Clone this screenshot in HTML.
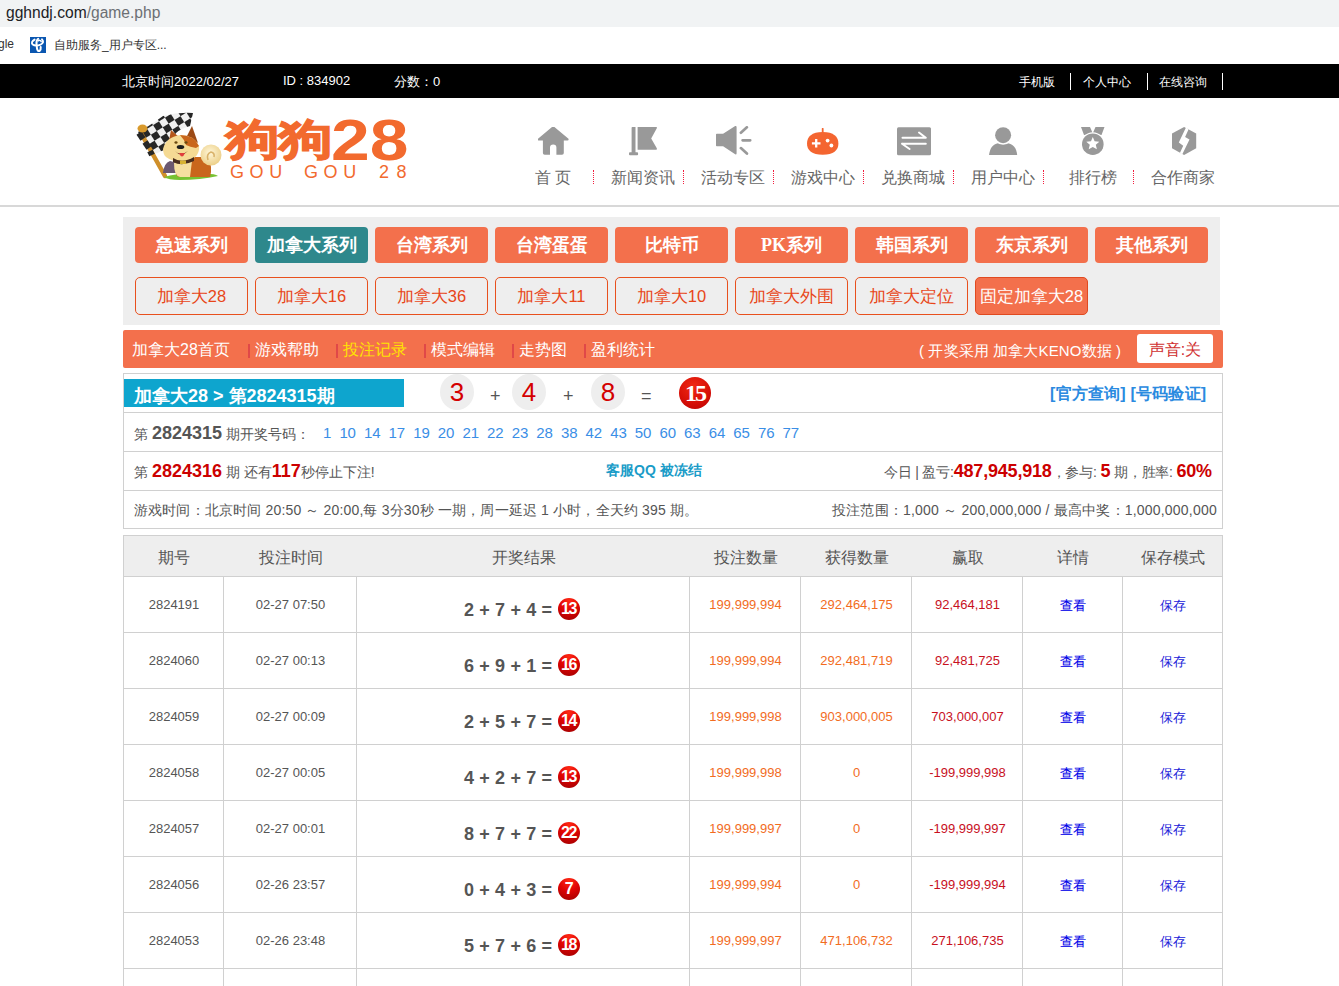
<!DOCTYPE html>
<html><head><meta charset="utf-8">
<style>
*{margin:0;padding:0;box-sizing:border-box}
html,body{width:1339px;height:986px;overflow:hidden;background:#fff;font-family:"Liberation Sans",sans-serif;color:#333}
.abs{position:absolute}
#urlbar{position:absolute;left:0;top:0;width:1339px;height:27px;background:#f1f3f4}
#urlbar span{position:absolute;left:6px;top:4px;font-size:15.6px;color:#202124;white-space:nowrap}
#urlbar span i{font-style:normal;color:#6c6f73}
#bm{position:absolute;left:0;top:27px;width:1339px;height:37px;background:#fff}
#bm .t1{position:absolute;left:-2px;top:10px;font-size:12px;color:#333}
#bm .ic{position:absolute;left:30px;top:37px}
#bm .t2{position:absolute;left:54px;top:10px;font-size:12px;color:#333}
#top{position:absolute;left:0;top:64px;width:1339px;height:34px;background:#000;color:#fff;font-size:12px}
#top span{position:absolute;top:10px;white-space:nowrap}
#top .vs{position:absolute;top:9px;width:1px;height:17px;background:#fff}
#hdr{position:absolute;left:0;top:98px;width:1339px;height:109px;background:#fff;border-bottom:2px solid #d8d8d8}
.nav{position:absolute;top:0;width:90px;height:107px;text-align:center}
.nav svg{position:absolute;left:29px;top:29px}
.nav .lb{position:absolute;left:0;width:90px;top:70px;font-size:16px;color:#666;white-space:nowrap}
.nav .sep{position:absolute;left:85px;top:72px;height:14px;border-left:1px dotted #f21e3e}

#panel{position:absolute;left:123px;top:217px;width:1097px;height:108px;background:#eee}
.b1{position:absolute;top:10px;width:113px;height:36px;background:#f3704c;border-radius:4px;color:#fff;font-size:18px;font-weight:bold;text-align:center;line-height:36px;font-family:"Liberation Serif",serif;white-space:nowrap}
.b1.on{background:#2e888c}
.b2{position:absolute;top:60px;width:113px;height:38px;border:1px solid #e8501e;border-radius:5px;color:#e84618;font-size:16.5px;text-align:center;line-height:37px;white-space:nowrap}
.b2.on{background:#f3704c;color:#fff;border-color:#e04a20}
#obar{position:absolute;left:123px;top:330px;width:1100px;height:38px;background:#f3704c;border-radius:2px;color:#fff;font-size:16px}
#obar span{position:absolute;top:10px;white-space:nowrap}
#obar .vl{position:absolute;top:14px;width:2px;height:14px;background:#e04848}
#info{position:absolute;left:123px;top:373px;width:1100px;height:156px;border:1px solid #d0d0d0;background:#fff;font-size:14px;color:#555}
#info .hr{position:absolute;left:0;width:1098px;height:1px;background:#d0d0d0}
#info span{position:absolute;white-space:nowrap}

#tbl{position:absolute;left:123px;top:535px;width:1100px;height:460px;border-left:1px solid #d0d0d0;border-right:1px solid #d0d0d0;border-top:1px solid #d0d0d0;background:#fff;overflow:hidden}
#tbl .th{position:absolute;left:0;top:0;width:1100px;height:41px;background:#eee;border-bottom:1px solid #d0d0d0}
#tbl .c{position:absolute;top:0;text-align:center;white-space:nowrap}
#tbl .vl{position:absolute;top:41px;width:1px;height:500px;background:#d0d0d0}
#tbl .hl{position:absolute;left:0;width:1100px;height:1px;background:#d0d0d0}
.hd{font-size:16px;color:#555;top:12px !important}
.rw{position:absolute;left:0;width:1100px;height:56px}
#tbl .rw .c{top:20px;font-size:13px;color:#555}
.rw .res{position:absolute;top:23px;font-size:18px;font-weight:bold;color:#555;white-space:nowrap;letter-spacing:0.15px}
.rb{position:absolute;width:22px;height:22px;border-radius:50%;background:radial-gradient(circle at 50% 12%,#ff2a14 0%,#e00404 45%,#9c0000 100%);color:#fff;font-weight:bold;font-size:16px;text-align:center;line-height:22px;letter-spacing:-1.5px;text-indent:-1px}
.o{color:#f26c1e !important}.dr{color:#c8101e !important}.bl{color:#0000e8 !important;-webkit-text-stroke:0.1px #0000e8}.bl2{color:#2020d8 !important}
</style></head><body>
<div id="urlbar"><span>gghndj.com<i>/game.php</i></span></div>
<div id="bm"><span class="t1">gle</span><svg class="abs" style="left:30px;top:10px" width="16" height="16" viewBox="0 0 16 16"><rect width="16" height="16" fill="#0a56b0"/><g stroke="#fff" fill="none" stroke-linecap="round"><path d="M4.6 2.6 Q0.8 5 2.4 7.2 Q5.5 9.6 10.5 7.6 Q14.8 5.6 12 2.3" stroke-width="1.9"/><path d="M8.2 1.8 Q6.2 3.2 6.5 7 L7 11.5 Q7.6 14.6 9.6 14 Q11 13 10.7 10" stroke-width="2"/><path d="M8.2 3.8 Q10.2 2.6 11.2 4.6" stroke-width="1.5"/></g></svg><span class="t2">自助服务_用户专区...</span></div>
<div id="top">
<span style="left:122px;font-size:13px;top:9px">北京时间2022/02/27</span>
<span style="left:283px;font-size:13px;top:9px">ID : 834902</span>
<span style="left:394px;font-size:13px;top:9px">分数：0</span>
<span style="left:1019px">手机版</span><div class="vs" style="left:1070px"></div>
<span style="left:1083px">个人中心</span><div class="vs" style="left:1147px"></div>
<span style="left:1159px">在线咨询</span><div class="vs" style="left:1222px"></div>
</div>
<div id="hdr">
<svg class="abs" style="left:130px;top:7px" width="100" height="80" viewBox="0 0 100 80">
 <defs>
  <pattern id="chk" width="14" height="14" patternUnits="userSpaceOnUse" patternTransform="translate(6,6) rotate(-32)">
   <rect width="14" height="14" fill="#f0f0f0"/><rect width="7" height="7" fill="#262626"/><rect x="7" y="7" width="7" height="7" fill="#262626"/>
  </pattern>
  <radialGradient id="tailg" cx="0.45" cy="0.4" r="0.6"><stop offset="0" stop-color="#fff6d8"/><stop offset="1" stop-color="#ecd08a"/></radialGradient>
 </defs>
 <path d="M8 27 Q18 22 33 11 Q48 7 63 8 L60 21 Q50 24 46 28 L36 44 Q28 48 22 50 Z" fill="url(#chk)"/>
 <path d="M12 30 L35 71" stroke="#cf8f2a" stroke-width="4.5" stroke-linecap="round"/>
 <path d="M9 28 L13 34" stroke="#262626" stroke-width="6"/>
 <path d="M15 37 L19 43" stroke="#262626" stroke-width="6"/>
 <path d="M20 46 L22 50" stroke="#262626" stroke-width="6"/>
 <ellipse cx="12.5" cy="23.5" rx="5" ry="4" fill="#d99a2c"/>
 <path d="M33 68 Q34 58 40 56 L48 58 L47 68 Z" fill="#6b5870"/>
 <path d="M34 72 Q50 67 70 69 Q84 68 88 71 Q70 75 50 75 Q38 75 34 72 Z" fill="#78c232"/>
 <path d="M46 60 Q44 72 50 72 L80 72 Q83 62 78 52 L58 52 Z" fill="#c9661c"/>
 <path d="M44 58 Q44 71 50 72 L60 72 L62 56 Z" fill="#f6dfa0"/>
 <circle cx="81" cy="50" r="10.5" fill="url(#tailg)"/>
 <path d="M78 55 Q76 49 81 47 Q85 48 84 52" stroke="#d9b26a" stroke-width="1.6" fill="none"/>
 <path d="M39 36 L41 25 L49 32 Z" fill="#b5561a"/>
 <path d="M57 31 L62 21 L68 38 Z" fill="#9c4a16"/>
 <path d="M33 44 Q36 32 50 30 Q64 30 69 41 Q70 52 58 56 Q44 58 36 52 Q33 49 33 44 Z" fill="#f5da94"/>
 <path d="M50 30 Q64 30 69 41 L66 43 Q60 42 56 40 Q54 34 50 30 Z" fill="#c9661c"/>
 <ellipse cx="46" cy="37.5" rx="1.6" ry="1.3" fill="#6a4a10"/>
 <ellipse cx="56" cy="37.5" rx="1.6" ry="1.3" fill="#6a4a10"/>
 <ellipse cx="50.5" cy="42" rx="3.8" ry="2" fill="#1e1e1e"/>
 <path d="M45 46 Q51 53 58 46 Q54 49 51 49 Q48 49 45 46 Z" fill="#5a2a18"/>
 <path d="M49 48 Q52 55 55 48 Z" fill="#e03c3c"/>
 <path d="M43 53 Q52 59 64 52 L64 56 Q52 62 43 57 Z" fill="#4a2e1e"/>
 <rect x="50" y="55.5" width="6" height="3.5" fill="#d8b232"/>
</svg>
<div class="abs" style="left:226px;top:21px;width:49px;height:44px;overflow:visible"><span style="display:inline-block;font-size:42px;font-weight:900;color:#f26a2e;-webkit-text-stroke:1.6px #f26a2e;line-height:42px;transform:scaleX(1.27);transform-origin:0 0">狗</span></div>
<div class="abs" style="left:279px;top:21px;width:49px;height:44px;overflow:visible"><span style="display:inline-block;font-size:42px;font-weight:900;color:#f26a2e;-webkit-text-stroke:1.6px #f26a2e;line-height:42px;transform:scaleX(1.27);transform-origin:0 0">狗</span></div>
<div class="abs" style="left:331px;top:10px;white-space:nowrap"><span style="display:inline-block;font-size:58px;font-weight:bold;color:#f26a2e;line-height:64px;transform:scaleX(1.2);transform-origin:0 0;letter-spacing:0px">28</span></div>
<div class="abs" style="left:230px;top:64px;font-size:18px;color:#f26a2e;white-space:nowrap;letter-spacing:5.6px">GOU</div>
<div class="abs" style="left:304px;top:64px;font-size:18px;color:#f26a2e;white-space:nowrap;letter-spacing:5.6px">GOU</div>
<div class="abs" style="left:379px;top:64px;font-size:18px;color:#f26a2e;white-space:nowrap;letter-spacing:7.6px">28</div>
<div class="nav" style="left:508px"><svg width="32" height="30" viewBox="0 0 32 30" style="left:30px;top:29px"><path d="M15.2 -1 L30.5 11.8 Q31 13.6 29.5 13.6 L25.8 13.6 L25.8 26 Q25.8 27.8 24 27.8 L18.4 27.8 L18.4 20.5 Q18.4 17.6 15.2 17.6 Q12 17.6 12 20.5 L12 27.8 L6.7 27.8 Q4.9 27.8 4.9 26 L4.9 13.6 L1 13.6 Q-0.5 13.6 0 11.8 Z" fill="#999"/></svg><div class="lb">首&nbsp;页</div><div class="sep"></div></div>
<div class="nav" style="left:598px"><svg width="32" height="30" viewBox="0 0 32 30" style="left:31px;top:28.5px"><path d="M3.3 0 L6.5 0 L6.5 25.3 L8.2 25.3 Q9.1 25.3 9.1 26.5 L9.1 27.3 Q9.1 28.3 8.2 28.3 L0.9 28.3 Q0 28.3 0 27.3 L0 26.5 Q0 25.3 0.9 25.3 L2.6 25.3 L2.6 0.6 Z M8.6 0 L27.5 0 Q28.3 0.5 27.8 1.3 L22.2 11.4 L27.8 21.3 Q28.3 22.5 27.3 22.7 L8.6 22.7 Z" fill="#999"/></svg><div class="lb">新闻资讯</div><div class="sep"></div></div>
<div class="nav" style="left:688px"><svg width="36" height="30" viewBox="0 0 36 30" style="left:27.8px;top:28.3px"><path d="M0.8 7.8 L7.1 7.8 L19.2 0.1 Q20.6 -0.3 20.6 1.2 L20.6 27.2 Q20.6 28.7 19.2 28.3 L7.1 20.2 L0.8 20.2 Q0 20.2 0 19.4 L0 8.6 Q0 7.8 0.8 7.8 Z" fill="#999"/><path d="M24.9 6.7 L30.9 1.3 M26.6 14.3 L34.2 14.3 M24.9 22.1 L30.9 27.5" stroke="#999" stroke-width="2.7" stroke-linecap="round"/></svg><div class="lb">活动专区</div><div class="sep"></div></div>
<div class="nav" style="left:778px"><svg width="34" height="30" viewBox="0 0 34 30" style="left:29.3px;top:30px"><path d="M15.7 0.8 L15.7 4.5" stroke="#f46530" stroke-width="1.8" stroke-linecap="round"/><path d="M15.7 3.9 C26.5 3.9 31.4 8.5 31.4 15.5 C31.4 22.5 26.5 26.7 15.7 26.7 C4.9 26.7 0 22.5 0 15.5 C0 8.5 4.9 3.9 15.7 3.9 Z" fill="#f46530"/><path d="M4.9 15.3 L13.5 15.3 M9.2 11 L9.2 19.6" stroke="#fff" stroke-width="2.3"/><circle cx="20.6" cy="12.6" r="1.9" fill="#fff"/><circle cx="24.4" cy="17.5" r="1.9" fill="#fff"/></svg><div class="lb">游戏中心</div><div class="sep"></div></div>
<div class="nav" style="left:868px"><svg width="36" height="30" viewBox="0 0 36 30" style="left:29px;top:29px"><rect x="0" y="0.3" width="34" height="28" rx="1.5" fill="#999"/><path d="M5.5 10.8 L28.8 10.8 L22 5.5 M5 16.7 L28.8 16.7 M5 16.7 L12.6 22" stroke="#fff" stroke-width="2" stroke-linecap="round" stroke-linejoin="round" fill="none"/></svg><div class="lb">兑换商城</div><div class="sep"></div></div>
<div class="nav" style="left:958px"><svg width="32" height="30" viewBox="0 0 32 30" style="left:31px;top:29px"><path d="M0 28 C1 21 4 17 9 16.3 L19 16.3 C24 17 27.5 21 28.2 28 Z" fill="#999"/><circle cx="14.1" cy="8.2" r="9.6" fill="#fff"/><circle cx="14.1" cy="8.2" r="8" fill="#999"/></svg><div class="lb">用户中心</div><div class="sep"></div></div>
<div class="nav" style="left:1048px"><svg width="32" height="30" viewBox="0 0 32 30" style="left:33px"><path d="M0 0 L9 0 L12.5 8 L3 8 Z M23.5 0 L14.5 0 L11 8 L20.5 8 Z" fill="#999"/><circle cx="11.8" cy="17.2" r="12" fill="#fff"/><circle cx="11.8" cy="17.2" r="10.8" fill="#999"/><path d="M11.8 10 L13.6 14.3 L18.3 14.7 L14.8 17.7 L15.9 22.3 L11.8 19.9 L7.7 22.3 L8.8 17.7 L5.3 14.7 L10 14.3 Z" fill="#fff"/></svg><div class="lb">排行榜</div><div class="sep"></div></div>
<div class="nav" style="left:1138px"><svg width="32" height="30" viewBox="0 0 32 30" style="left:34px"><path d="M12.1 0 L24.2 6.6 L24.2 21.2 L12.1 28 L0 21.2 L0 6.6 Z" fill="#999"/><path d="M14.1 0.3 L6.8 15.5 L11.2 18.7 L8 25.8 L10.2 27.5 L17.5 12.4 L13.1 10 L16.5 2.5 Z" fill="#fff"/></svg><div class="lb">合作商家</div></div>
</div>
<div id="panel">
<div class="b1" style="left:12px">急速系列</div>
<div class="b1 on" style="left:132px">加拿大系列</div>
<div class="b1" style="left:252px">台湾系列</div>
<div class="b1" style="left:372px">台湾蛋蛋</div>
<div class="b1" style="left:492px">比特币</div>
<div class="b1" style="left:612px">PK系列</div>
<div class="b1" style="left:732px">韩国系列</div>
<div class="b1" style="left:852px">东京系列</div>
<div class="b1" style="left:972px">其他系列</div>
<div class="b2" style="left:12px">加拿大28</div>
<div class="b2" style="left:132px">加拿大16</div>
<div class="b2" style="left:252px">加拿大36</div>
<div class="b2" style="left:372px">加拿大11</div>
<div class="b2" style="left:492px">加拿大10</div>
<div class="b2" style="left:612px">加拿大外围</div>
<div class="b2" style="left:732px">加拿大定位</div>
<div class="b2 on" style="left:852px">固定加拿大28</div>
</div>
<div id="obar">
<span style="left:9px">加拿大28首页</span><div class="vl" style="left:125px"></div>
<span style="left:132px">游戏帮助</span><div class="vl" style="left:213px"></div>
<span style="left:220px;color:#ffe400">投注记录</span><div class="vl" style="left:301px"></div>
<span style="left:308px">模式编辑</span><div class="vl" style="left:389px"></div>
<span style="left:396px">走势图</span><div class="vl" style="left:461px"></div>
<span style="left:468px">盈利统计</span>
<span style="left:796px;font-size:15px;top:12px;letter-spacing:0.12px">( 开奖采用 加拿大KENO数据 )</span>
<div style="position:absolute;left:1014px;top:4px;width:76px;height:29px;background:#fff;border-radius:3px;color:#d03030;font-size:16px;text-align:center;line-height:32px">声音:关</div>
</div>
<div id="info">
<div style="position:absolute;left:0px;top:5px;width:280px;height:28px;background:#0ea5ce"></div>
<span style="left:10px;top:10px;color:#fff;font-size:18px;font-weight:bold">加拿大28 &gt; 第2824315期</span>
<div class="ball" style="position:absolute;left:316px;top:0px;width:34px;height:36px;border-radius:50%;background:#eee;color:#d40000;font-size:26px;text-align:center;line-height:36px">3</div>
<span style="left:366px;top:12px;font-size:18px">+</span>
<div style="position:absolute;left:388px;top:0px;width:34px;height:36px;border-radius:50%;background:#eee;color:#d40000;font-size:26px;text-align:center;line-height:36px">4</div>
<span style="left:439px;top:12px;font-size:18px">+</span>
<div style="position:absolute;left:467px;top:0px;width:34px;height:36px;border-radius:50%;background:#eee;color:#d40000;font-size:26px;text-align:center;line-height:36px">8</div>
<span style="left:517px;top:12px;font-size:18px">=</span>
<div style="position:absolute;left:555px;top:3px;width:32px;height:32px;border-radius:50%;background:radial-gradient(circle at 45% 30%,#f02a14 0%,#d81008 55%,#b80000 100%);color:#fff;font-size:24px;font-weight:bold;text-align:center;line-height:32px;font-family:'Liberation Serif',serif;letter-spacing:-2px">15</div>
<span style="left:926px;top:10px;color:#2a8ae0;font-size:16px;font-weight:bold;letter-spacing:0.2px">[官方查询] [号码验证]</span>
<div class="hr" style="top:38px"></div>
<span style="left:10px;top:49px">第 <b style="font-size:18px;color:#555">2824315</b> 期开奖号码：</span>
<span style="left:199px;top:50px;color:#3a8ee6;font-size:15px;letter-spacing:-0.1px">1&nbsp;&nbsp;10&nbsp;&nbsp;14&nbsp;&nbsp;17&nbsp;&nbsp;19&nbsp;&nbsp;20&nbsp;&nbsp;21&nbsp;&nbsp;22&nbsp;&nbsp;23&nbsp;&nbsp;28&nbsp;&nbsp;38&nbsp;&nbsp;42&nbsp;&nbsp;43&nbsp;&nbsp;50&nbsp;&nbsp;60&nbsp;&nbsp;63&nbsp;&nbsp;64&nbsp;&nbsp;65&nbsp;&nbsp;76&nbsp;&nbsp;77</span>
<div class="hr" style="top:77px"></div>
<span style="left:10px;top:87px">第 <b style="font-size:18px;color:#c00">2824316</b> 期 还有<b style="font-size:18px;color:#c00">117</b>秒停止下注!</span>
<span style="left:482px;top:88px;color:#1a9cc8;font-weight:bold">客服QQ 被冻结</span>
<span style="left:760px;top:87px;letter-spacing:-0.2px">今日 | 盈亏:<b style="font-size:18px;color:#c00">487,945,918</b>，参与: <b style="font-size:18px;color:#c00">5</b> 期，胜率: <b style="font-size:18px;color:#c00">60%</b></span>
<div class="hr" style="top:116px"></div>
<span style="left:10px;top:128px;letter-spacing:0.16px">游戏时间：北京时间 20:50 ～ 20:00,每 3分30秒 一期，周一延迟 1 小时，全天约 395 期。</span>
<span style="left:708px;top:128px;letter-spacing:0.2px">投注范围：1,000 ～ 200,000,000 / 最高中奖：1,000,000,000</span>
</div>
<div id="tbl">
<div class="th">
<div class="c hd" style="left:0px;width:100px">期号</div>
<div class="c hd" style="left:100px;width:133px">投注时间</div>
<div class="c hd" style="left:233px;width:333px">开奖结果</div>
<div class="c hd" style="left:566px;width:111px">投注数量</div>
<div class="c hd" style="left:677px;width:111px">获得数量</div>
<div class="c hd" style="left:788px;width:111px">赢取</div>
<div class="c hd" style="left:899px;width:100px">详情</div>
<div class="c hd" style="left:999px;width:100px">保存模式</div>
</div>
<div class="vl" style="left:99px"></div>
<div class="vl" style="left:232px"></div>
<div class="vl" style="left:565px"></div>
<div class="vl" style="left:676px"></div>
<div class="vl" style="left:787px"></div>
<div class="vl" style="left:898px"></div>
<div class="vl" style="left:998px"></div>
<div class="rw" style="top:41px"><div class="c" style="left:0;width:100px">2824191</div><div class="c" style="left:100px;width:133px">02-27 07:50</div><div class="res" style="left:340px">2 + 7 + 4 =</div><div class="rb" style="left:434px;top:21px">13</div><div class="c o" style="left:566px;width:111px">199,999,994</div><div class="c o" style="left:677px;width:111px">292,464,175</div><div class="c dr" style="left:788px;width:111px">92,464,181</div><div class="c bl" style="left:899px;width:100px">查看</div><div class="c bl2" style="left:999px;width:100px">保存</div></div>
<div class="hl" style="top:96px"></div>
<div class="rw" style="top:97px"><div class="c" style="left:0;width:100px">2824060</div><div class="c" style="left:100px;width:133px">02-27 00:13</div><div class="res" style="left:340px">6 + 9 + 1 =</div><div class="rb" style="left:434px;top:21px">16</div><div class="c o" style="left:566px;width:111px">199,999,994</div><div class="c o" style="left:677px;width:111px">292,481,719</div><div class="c dr" style="left:788px;width:111px">92,481,725</div><div class="c bl" style="left:899px;width:100px">查看</div><div class="c bl2" style="left:999px;width:100px">保存</div></div>
<div class="hl" style="top:152px"></div>
<div class="rw" style="top:153px"><div class="c" style="left:0;width:100px">2824059</div><div class="c" style="left:100px;width:133px">02-27 00:09</div><div class="res" style="left:340px">2 + 5 + 7 =</div><div class="rb" style="left:434px;top:21px">14</div><div class="c o" style="left:566px;width:111px">199,999,998</div><div class="c o" style="left:677px;width:111px">903,000,005</div><div class="c dr" style="left:788px;width:111px">703,000,007</div><div class="c bl" style="left:899px;width:100px">查看</div><div class="c bl2" style="left:999px;width:100px">保存</div></div>
<div class="hl" style="top:208px"></div>
<div class="rw" style="top:209px"><div class="c" style="left:0;width:100px">2824058</div><div class="c" style="left:100px;width:133px">02-27 00:05</div><div class="res" style="left:340px">4 + 2 + 7 =</div><div class="rb" style="left:434px;top:21px">13</div><div class="c o" style="left:566px;width:111px">199,999,998</div><div class="c o" style="left:677px;width:111px">0</div><div class="c dr" style="left:788px;width:111px">-199,999,998</div><div class="c bl" style="left:899px;width:100px">查看</div><div class="c bl2" style="left:999px;width:100px">保存</div></div>
<div class="hl" style="top:264px"></div>
<div class="rw" style="top:265px"><div class="c" style="left:0;width:100px">2824057</div><div class="c" style="left:100px;width:133px">02-27 00:01</div><div class="res" style="left:340px">8 + 7 + 7 =</div><div class="rb" style="left:434px;top:21px">22</div><div class="c o" style="left:566px;width:111px">199,999,997</div><div class="c o" style="left:677px;width:111px">0</div><div class="c dr" style="left:788px;width:111px">-199,999,997</div><div class="c bl" style="left:899px;width:100px">查看</div><div class="c bl2" style="left:999px;width:100px">保存</div></div>
<div class="hl" style="top:320px"></div>
<div class="rw" style="top:321px"><div class="c" style="left:0;width:100px">2824056</div><div class="c" style="left:100px;width:133px">02-26 23:57</div><div class="res" style="left:340px">0 + 4 + 3 =</div><div class="rb" style="left:434px;top:21px">7</div><div class="c o" style="left:566px;width:111px">199,999,994</div><div class="c o" style="left:677px;width:111px">0</div><div class="c dr" style="left:788px;width:111px">-199,999,994</div><div class="c bl" style="left:899px;width:100px">查看</div><div class="c bl2" style="left:999px;width:100px">保存</div></div>
<div class="hl" style="top:376px"></div>
<div class="rw" style="top:377px"><div class="c" style="left:0;width:100px">2824053</div><div class="c" style="left:100px;width:133px">02-26 23:48</div><div class="res" style="left:340px">5 + 7 + 6 =</div><div class="rb" style="left:434px;top:21px">18</div><div class="c o" style="left:566px;width:111px">199,999,997</div><div class="c o" style="left:677px;width:111px">471,106,732</div><div class="c dr" style="left:788px;width:111px">271,106,735</div><div class="c bl" style="left:899px;width:100px">查看</div><div class="c bl2" style="left:999px;width:100px">保存</div></div>
<div class="hl" style="top:432px"></div>
</div>
</body></html>
